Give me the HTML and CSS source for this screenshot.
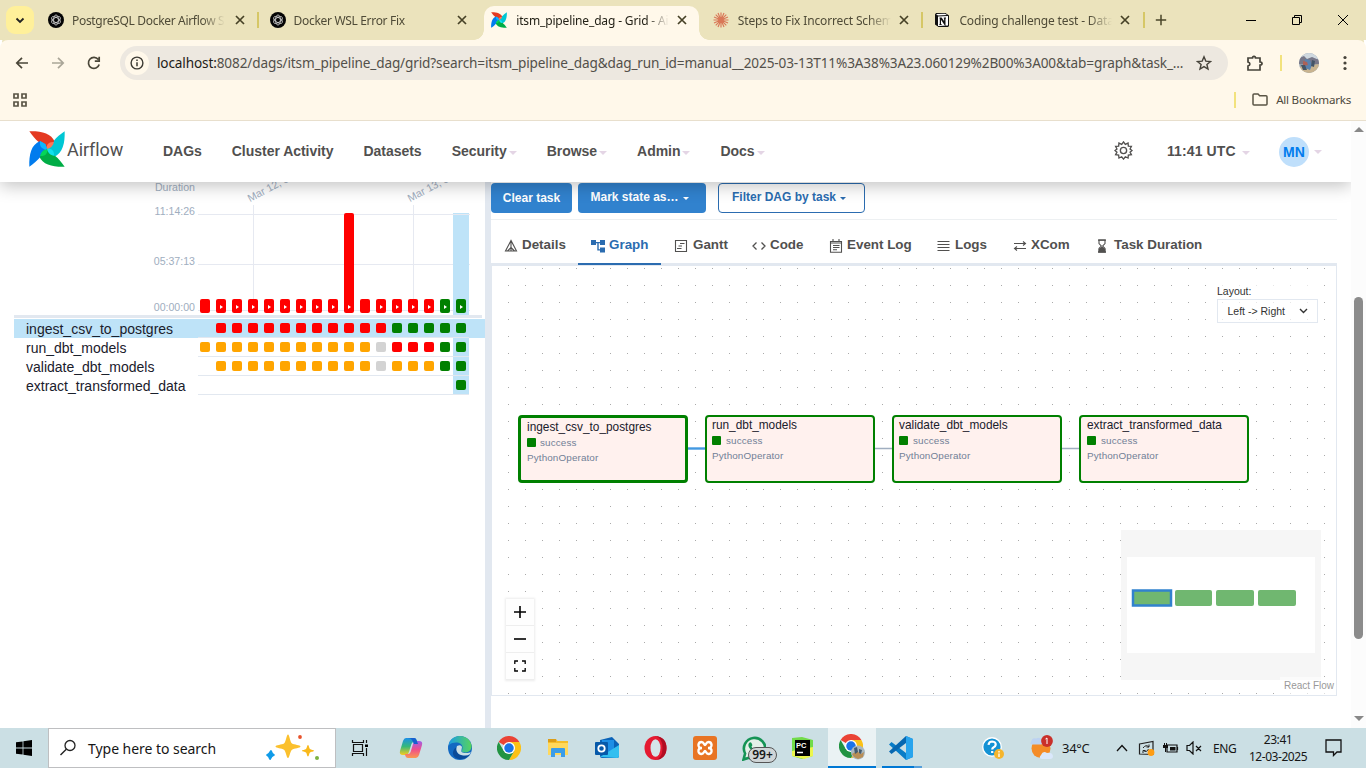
FILE: index.html
```html
<!DOCTYPE html>
<html lang="en">
<head>
<meta charset="utf-8">
<title>itsm_pipeline_dag - Grid - Airflow</title>
<link rel="stylesheet" href="styles.css">
</head>
<body>
<svg class="defs" aria-hidden="true">
  <symbol id="close" viewBox="0 0 12 12"><path d="M2 2l8 8M10 2l-8 8" stroke="currentColor" stroke-width="1.7" fill="none"/></symbol>
  <symbol id="gpt" viewBox="0 0 16 16"><circle cx="8" cy="8" r="8" fill="#050505"/><g fill="none" stroke="#d5d5d5" stroke-width=".8"><ellipse cx="8" cy="8" rx="2.4" ry="5"/><ellipse cx="8" cy="8" rx="2.4" ry="5" transform="rotate(60 8 8)"/><ellipse cx="8" cy="8" rx="2.4" ry="5" transform="rotate(120 8 8)"/></g></symbol>
  <symbol id="pinwheel" viewBox="0 0 107 107">
    <g fill="#e43921"><path d="M1 1C36 0 66 6 77 33L66 50 53.500 53.500C50 38 38 33 29 33 20 26 9 13 1 1Z"/><path d="M53.500 53.500C50 40 60 30 77 33L68 49Z" fill="#ff7557"/></g>
    <g transform="rotate(90 53.500 53.500)" fill="#00c7d4"><path d="M1 1C36 0 66 6 77 33L66 50 53.500 53.500C50 38 38 33 29 33 20 26 9 13 1 1Z"/><path d="M53.500 53.500C50 40 60 30 77 33L68 49Z" fill="#11e1ee"/></g>
    <g transform="rotate(180 53.500 53.500)" fill="#00ad46"><path d="M1 1C36 0 66 6 77 33L66 50 53.500 53.500C50 38 38 33 29 33 20 26 9 13 1 1Z"/><path d="M53.500 53.500C50 40 60 30 77 33L68 49Z" fill="#04d659"/></g>
    <g transform="rotate(270 53.500 53.500)" fill="#017cee"><path d="M1 1C36 0 66 6 77 33L66 50 53.500 53.500C50 38 38 33 29 33 20 26 9 13 1 1Z"/><path d="M53.500 53.500C50 40 60 30 77 33L68 49Z" fill="#0cb6ff"/></g>
  </symbol>
  <symbol id="chrome" viewBox="0 0 48 48"><path d="M24 24L3.200 12A24 24 0 0 1 44.800 12L24 12Z" fill="#ea4335"/><path d="M44.800 12A24 24 0 0 1 24 48L34.400 30 34 18 24 12Z" fill="#fbc116"/><path d="M3.200 12A24 24 0 0 0 24 48L34.400 30 24 34 13.600 30Z" fill="#229342"/><circle cx="24" cy="24" r="12" fill="#fff"/><circle cx="24" cy="24" r="9.500" fill="#1a73e8"/></symbol>
</svg>

<header class="tabs">
  <span class="tab-search"><svg width="10" height="7" viewBox="0 0 10 7"><path d="M1.500 1.500L5 5l3.500-3.500" fill="none" stroke="#222" stroke-width="1.800"/></svg></span>
  <div class="tab sep"><svg class="fav"><use href="#gpt"/></svg><span class="title">PostgreSQL Docker Airflow S</span><svg class="x"><use href="#close"/></svg></div>
  <div class="tab"><svg class="fav"><use href="#gpt"/></svg><span class="title">Docker WSL Error Fix</span><svg class="x"><use href="#close"/></svg></div>
  <div class="tab active"><svg class="fav"><use href="#pinwheel"/></svg><span class="title">itsm_pipeline_dag - Grid - Ai</span><svg class="x"><use href="#close"/></svg></div>
  <div class="tab sep"><svg class="fav" viewBox="0 0 16 16"><path d="M8 .5v15M.5 8h15M2.700 2.700l10.600 10.600M2.700 13.300L13.300 2.700M5 1l6 14M11 1L5 15M1 5l14 6M1 11l14-6" stroke="#d97757" stroke-width="1.150"/></svg><span class="title">Steps to Fix Incorrect Schem</span><svg class="x"><use href="#close"/></svg></div>
  <div class="tab sep"><svg class="fav" viewBox="0 0 16 16"><path d="M1 2.500L2 1h9.500L15 3.500V14l-1 1H4.500L1 12.500Z" fill="#111"/><path d="M4 4.500L14 4v9.500L4 14Z" fill="#fff"/><path d="M2 2l9-.3L13 3 4 3.400Z" fill="#fff"/><path d="M5.500 6h1.800l3.400 5V6.400M12 6H9.800M6.400 6v6.500M5.400 12.500h2.200M10.900 6v6.500L6.800 6.500" stroke="#111" stroke-width="1.200" fill="none"/></svg><span class="title">Coding challenge test - Data</span><svg class="x"><use href="#close"/></svg></div>
  <svg class="plus" viewBox="0 0 12 12"><path d="M6 .8v10.400M.8 6h10.400" stroke="#4a4529" stroke-width="1.500"/></svg>
  <div class="win">
    <svg width="12" height="12"><path d="M1 6.500h10" stroke="#000"/></svg>
    <svg width="12" height="12"><path d="M1.500 3.500h7v7h-7zM3.500 3.500v-2h7v7h-2" fill="none" stroke="#000"/></svg>
    <svg width="12" height="12"><path d="M1 1l10 10M11 1L1 11" stroke="#000"/></svg>
  </div>
</header>

<section class="toolbar">
  <div class="address">
    <svg width="14" height="14" viewBox="0 0 14 14"><path d="M13 7H2M7 1.800L1.800 7 7 12.200" fill="none" stroke="#4a4638" stroke-width="1.700"/></svg>
    <svg width="14" height="14" viewBox="0 0 14 14"><path d="M1 7h11M7 1.800L12.200 7 7 12.200" fill="none" stroke="#aaa698" stroke-width="1.700"/></svg>
    <svg width="14" height="14" viewBox="0 0 14 14"><path d="M12.200 8.500A5.500 5.500 0 1 1 11.300 3.500M12.200.8v4.400H7.800" fill="none" stroke="#4a4638" stroke-width="1.700"/></svg>
    <div class="url">
      <span class="info"><svg width="14" height="14" viewBox="0 0 14 14"><circle cx="7" cy="7" r="5.900" fill="none" stroke="#3c3a33" stroke-width="1.400"/><path d="M7 6.200v4M7 3.500v1.600" stroke="#3c3a33" stroke-width="1.500"/></svg></span>
      <span class="url-text"><b>localhost:</b>8082/dags/itsm_pipeline_dag/grid?search=itsm_pipeline_dag&amp;dag_run_id=manual__2025-03-13T11%3A38%3A23.060129%2B00%3A00&amp;tab=graph&amp;task_...</span>
      <svg class="star" width="16" height="16" viewBox="0 0 16 16"><path d="M8 1.800l1.800 4.300 4.700.4-3.600 3 1.100 4.600-4-2.500-4 2.500 1.100-4.600-3.600-3 4.700-.4Z" fill="none" stroke="#46433a" stroke-width="1.400"/></svg>
    </div>
    <svg class="ext" width="18" height="18" viewBox="0 0 18 18"><path d="M2 4h4.500c0-2.300 3-2.300 3 0H14v4c2.700 0 2.700 3.200 0 3.200V16H2v-4c2.500-.5 2.500-3.500 0-4Z" fill="none" stroke="#46433a" stroke-width="1.700"/></svg>
    <i class="bar"></i>
    <svg class="profile" width="20" height="20" viewBox="0 0 20 20"><clipPath id="pc"><circle cx="10" cy="10" r="10"/></clipPath><g clip-path="url(#pc)"><path fill="#8b9bab" d="M0 0h20v20H0z"/><path fill="#cfd8df" d="M0 0h20v6H0z"/><path fill="#778" d="M0 5l5-2 3 3 5-2 7 3v4H0z"/><path fill="#c9b48f" d="M0 14l20-3v10H0z"/><path fill="#5a82ad" d="M6 6l5 1 2 5-2 5-5-2z"/><path fill="#ad6156" d="M4 8l4 1 1 3-5 1z"/><path fill="#456" d="M2 12l4 0 2 5-4 0zM13 7l3 1-1 6-3-1z"/></g></svg>
    <svg class="dots" width="4" height="16"><g fill="#46433a"><circle cx="2" cy="2.500" r="1.600"/><circle cx="2" cy="8" r="1.600"/><circle cx="2" cy="13.500" r="1.600"/></g></svg>
  </div>
  <div class="bookmarks">
    <svg width="14" height="14"><path d="M1 1h4v4H1zM9 1h4v4H9zM1 9h4v4H1zM9 9h4v4H9z" fill="none" stroke="#5a5445" stroke-width="1.700"/></svg>
    <span class="allbm"><i class="bar"></i><svg width="16" height="13" viewBox="0 0 16 13"><path d="M1 2q0-1 1-1h4l1.700 1.700H14q1 0 1 1V11q0 1-1 1H2q-1 0-1-1Z" fill="none" stroke="#5a5445" stroke-width="1.500"/></svg><span>All Bookmarks</span></span>
  </div>
</section>

<main class="viewport">
 <div class="page">
  <nav class="navbar">
    <svg class="logo"><use href="#pinwheel"/></svg><span class="brand">Airflow</span>
    <div class="menu"><span>DAGs</span><span>Cluster Activity</span><span>Datasets</span><span>Security<i></i></span><span>Browse<i></i></span><span>Admin<i></i></span><span>Docs<i></i></span></div>
    <svg class="gear" viewBox="0 0 20 20"><path d="M10 1l1.900 2.600 2.900-1.400.3 3.200 3.200.3-1.400 2.700L19 10l-2.100 1.700 1.400 2.700-3.200.4-.3 3.200-2.900-1.400L10 19l-1.900-2.400L5.200 18l-.3-3.200-3.200-.4 1.400-2.700L1 10l2.100-1.600-1.400-2.700 3.200-.3.3-3.200 2.900 1.400Z" fill="none" stroke="#51504f" stroke-width="1.400"/><circle cx="10" cy="10" r="3.300" fill="none" stroke="#51504f" stroke-width="1.400"/></svg>
    <span class="clock">11:41 UTC<i></i></span>
    <span class="avatar">MN</span><i class="caret"></i>
  </nav>

  <div class="content">
    <section class="grid">
      <div class="chart">
        <div class="axis"><span>Duration</span><span>11:14:26</span><span>05:37:13</span><span>00:00:00</span></div>
        <div class="plot">
          <svg class="lines" width="272" height="134"><path d="M0 32.500h272M0 82.500h272M0 128.500h272M55.500 23v105M215.500 23v105" stroke="#e6e9f1"/></svg>
          <span class="date d1">Mar 12, 08:30</span><span class="date d2">Mar 13, 00:00</span>
          <div class="bars"><p><b class="plain"></b></p><p><b></b></p><p><b></b></p><p><b></b></p><p><b></b></p><p><b></b></p><p><b></b></p><p><b></b></p><p><b></b></p><p><b class="tall"></b></p><p><b class="plain"></b></p><p><b></b></p><p><b></b></p><p><b></b></p><p><b></b></p><p><b class="ok"></b></p><p class="sel"><b class="ok"></b></p></div>
        </div>
      </div>
      <div class="rows">
        <div class="row on"><span>ingest_csv_to_postgres</span><div><i></i><i class="f"></i><i class="f"></i><i class="f"></i><i class="f"></i><i class="f"></i><i class="f"></i><i class="f"></i><i class="f"></i><i class="f"></i><i class="f"></i><i class="f"></i><i class="s"></i><i class="s"></i><i class="s"></i><i class="s"></i><i class="s"></i></div></div>
        <div class="row"><span>run_dbt_models</span><div><i class="u"></i><i class="u"></i><i class="u"></i><i class="u"></i><i class="u"></i><i class="u"></i><i class="u"></i><i class="u"></i><i class="u"></i><i class="u"></i><i class="u"></i><i class="n"></i><i class="f"></i><i class="f"></i><i class="f"></i><i class="s"></i><i class="s"></i></div></div>
        <div class="row"><span>validate_dbt_models</span><div><i></i><i class="u"></i><i class="u"></i><i class="u"></i><i class="u"></i><i class="u"></i><i class="u"></i><i class="u"></i><i class="u"></i><i class="u"></i><i class="u"></i><i class="n"></i><i class="u"></i><i class="u"></i><i class="u"></i><i class="s"></i><i class="s"></i></div></div>
        <div class="row"><span>extract_transformed_data</span><div><i></i><i></i><i></i><i></i><i></i><i></i><i></i><i></i><i></i><i></i><i></i><i></i><i></i><i></i><i></i><i></i><i class="s"></i></div></div>
      </div>
    </section>
    <div class="divider"></div>
    <section class="details">
      <div class="actions"><button class="solid">Clear task</button><button class="solid mark">Mark state as…<i></i></button><button class="outline">Filter DAG by task<i></i></button></div>
      <div class="dtabs">
        <span class="t-details"><svg width="14" height="14" viewBox="0 0 14 14"><path d="M7 1.500L1.500 12h11ZM7 2v10M7 8.500L3.500 12M7 8.500l3.500 3.500" fill="none" stroke="#51504f" stroke-width="1.100"/></svg>Details</span>
        <span class="t-graph"><svg width="14" height="14" viewBox="0 0 14 14"><path d="M0 1h5v5H0zM9 1h5v5H9zM9 8.500h5v5H9zM5 3h4v1.300H7.700v6H9v1.300H6.300V4.300H5z" fill="#2b6cb0"/></svg>Graph</span>
        <span class="t-gantt"><svg width="14" height="14" viewBox="0 0 14 14"><path d="M1.500 1.500h11v11h-11zM6 4.500h4.500M4.500 7h3.500M3 9.500h4.500" fill="none" stroke="#51504f" stroke-width="1.100"/></svg>Gantt</span>
        <span class="t-code"><svg width="14" height="14" viewBox="0 0 14 14"><path d="M4.500 3.500L1 7l3.500 3.500M9.500 3.500L13 7l-3.500 3.500" fill="none" stroke="#51504f" stroke-width="1.300"/></svg>Code</span>
        <span class="t-event"><svg width="14" height="14" viewBox="0 0 14 14"><path d="M1.500 2.500h11v10.800h-11zM1.500 4h11M4 0v2M10 0v2M4 6.500h6.500M4 8.500h6.500M4 10.800h4" fill="none" stroke="#51504f" stroke-width="1.100"/></svg>Event Log</span>
        <span class="t-logs"><svg width="13" height="14" viewBox="0 0 13 14"><path d="M.5 2.500h12M.5 5.500h12M.5 8.500h12M.5 11.500h12" stroke="#51504f" stroke-width="1.100"/></svg>Logs</span>
        <span class="t-xcom"><svg width="14" height="14" viewBox="0 0 14 14"><path d="M1 4.500h11M10 2.500L12.500 4.500 10 6.500M13 9.500H2M4 7.500L1.500 9.500l2.500 2" fill="none" stroke="#51504f" stroke-width="1.100"/></svg>XCom</span>
        <span class="t-task"><svg width="12" height="14" viewBox="0 0 12 14"><path d="M3 1h6v3.500L6.700 7 9 9.500V13H3V9.500L5.300 7 3 4.500Z" fill="none" stroke="#51504f" stroke-width="1.100"/><path d="M6 7.500l3.300 2.500V13H2.700v-3ZM2 .5h8v1.300H2zM2 12.200h8v1.500H2z" fill="#51504f"/></svg>Task Duration</span>
      </div>
      <div class="canvas">
        <svg class="edges" width="846" height="431"><path d="M196 183.500h19" stroke="#4299e1" stroke-width="2.400"/><path d="M383 183.500h19M570 183.500h19" stroke="#a0aec0" stroke-width="1.500"/></svg>
        <article class="node n1"><h4>ingest_csv_to_postgres</h4><p><i></i>success</p><p>PythonOperator</p></article>
        <article class="node n2"><h4>run_dbt_models</h4><p><i></i>success</p><p>PythonOperator</p></article>
        <article class="node n3"><h4>validate_dbt_models</h4><p><i></i>success</p><p>PythonOperator</p></article>
        <article class="node n4"><h4>extract_transformed_data</h4><p><i></i>success</p><p>PythonOperator</p></article>
        <div class="layout">Layout:<div>Left -&gt; Right<svg width="9" height="6"><path d="M1 1l3.500 3.500L8 1" fill="none" stroke="#333" stroke-width="1.400"/></svg></div></div>
        <div class="zoom">
          <span><svg width="12" height="12"><path d="M6 0v12M0 6h12" stroke="#000" stroke-width="1.600"/></svg></span>
          <span><svg width="12" height="12"><path d="M0 6h12" stroke="#000" stroke-width="1.600"/></svg></span>
          <span><svg width="12" height="12"><path d="M.8 4V1h3.200M8 1h3.200v3M11.200 8v3H8M4 11H.8V8" fill="none" stroke="#000" stroke-width="1.300"/></svg></span>
        </div>
        <svg class="minimap" width="200" height="150"><path d="M0 0h200v150H0z" fill="#f6f6f6"/><path d="M6 27h188v96H6z" fill="#fff"/><g fill="#70b770"><rect x="12" y="60.500" width="38" height="15" stroke="#3182ce" stroke-width="2.500"/><rect x="54" y="60" width="37" height="16" rx="2"/><rect x="95" y="60" width="38" height="16" rx="2"/><rect x="137" y="60" width="38" height="16" rx="2"/></g></svg>
        <span class="attribution">React Flow</span>
      </div>
    </section>
  </div>
 </div>
 <div class="scroll"><i class="up"></i><i class="thumb"></i><i class="down"></i></div>
</main>

<footer class="taskbar">
  <span class="start"><svg width="16" height="16" viewBox="0 0 16 16"><path d="M0 2.300l6.600-.9v6.200H0zM7.400 1.300L16 0v7.600H7.400zM0 8.400h6.600v6.200L0 13.700zM7.400 8.400H16V16l-8.600-1.300z"/></svg></span>
  <div class="search"><svg width="18" height="18" viewBox="0 0 18 18"><circle cx="11" cy="6.500" r="5" fill="none" stroke="#222" stroke-width="1.300"/><path d="M7.300 10.200L1.500 16" stroke="#222" stroke-width="1.400"/></svg><span>Type here to search</span>
    <svg class="spark" width="64" height="30" viewBox="0 0 64 30"><path d="M25 1.500c1.500 0 2 7.500 4 9 2 1.300 8.500 1.500 8.500 3s-6.500 1.800-8.500 3.200c-2 1.600-2.500 8.300-4 8.300s-2-6.700-4-8.300c-2-1.400-8.500-1.700-8.500-3.200s6.500-1.700 8.500-3c2-1.500 2.500-9 4-9Z" fill="#fbc02d"/><path d="M45 12c1 0 1 3 2 4s4 .8 4 1.800-3 .8-4 1.800-1 4-2 4-1-3-2-4-4-.8-4-1.800 3-.8 4-1.800 1-4 2-4Z" fill="#f9b91c"/><path d="M8 18q.8 3 3 4-2.500.8-4 4-1-3-3-4 2.500-1 4-4Z" fill="#109be8" stroke="#109be8" stroke-width="1.800" stroke-linejoin="round"/><circle cx="37" cy="4" r="1.900" fill="#e8522b"/><circle cx="54" cy="25" r="2" fill="#7cb342"/></svg></div>
  <span class="slot view"><svg width="18" height="16" viewBox="0 0 18 16"><path d="M2.500 4.500h9v7h-9zM1.500 0v2.500h11V0M1.500 16v-2.500h11V16M15.500 0v3M15.500 8v8" fill="none" stroke="#111" stroke-width="1.200"/><path d="M14 4.500h3v2.500h-3z"/></svg></span>
  <span class="slot"><svg width="24" height="24" viewBox="0 0 24 24"><defs><linearGradient id="c1" x1="0" y1="0" x2="0" y2="1"><stop stop-color="#1b8fe8"/><stop offset=".5" stop-color="#35b979"/><stop offset="1" stop-color="#f8cb20"/></linearGradient><linearGradient id="c2" x1="0" y1="0" x2="0" y2="1"><stop stop-color="#9e5fe8"/><stop offset=".5" stop-color="#ef4f8b"/><stop offset="1" stop-color="#fb9850"/></linearGradient></defs><path d="M7 2h8q2 0 2.600 2L18 6h-3q-2 0-2.600 2L10 16q-1 3-3 3H4q-4 0-3-4L4 5q1-3 3-3Z" fill="url(#c1)"/><path d="M17 22H9q-2 0-2.600-2L6 18h3q2 0 2.600-2L14 8q1-3 3-3h3q4 0 3 4l-3 10q-1 3-3 3Z" fill="url(#c2)"/><path d="M9 2h6q2 0 2.500 2L19 8h-4L13 4Q12 2 9 2Z" fill="#1760ce"/></svg></span>
  <span class="slot"><svg width="24" height="24" viewBox="0 0 24 24"><defs><linearGradient id="e1"><stop stop-color="#1b9de2"/><stop offset="1" stop-color="#57d45d"/></linearGradient></defs><circle cx="12" cy="12" r="12" fill="#1269c2"/><path d="M1 9C2-2 20-4 23.500 9c1 7-7 9-10 6.500 0-1.500 1-1.500 1-4C14.500 6 6 5 1 9Z" fill="url(#e1)"/><path d="M9 11c-2 5 2 10 11 8 1-.3 2-.5 1 .6C15 26 4 23 5 16q1-4 4-5Z" fill="#0b4b98"/><path d="M14 11q-1-3-5-1c-2 5 1 8 4 9q6 1.500 9-1l.8-2c-3 2-10 1-9.500-1Z" fill="#cbdfe4"/></svg></span>
  <span class="slot"><svg width="24" height="24"><use href="#chrome"/></svg></span>
  <span class="slot"><svg width="22" height="20" viewBox="0 0 22 20"><path d="M1 1h8l1.500 2H21v14H1z" fill="#f5bd29"/><path d="M1 5h20v12H1z" fill="#ffd85c"/><path d="M1 1h8v3H1z" fill="#dc9d18"/><path d="M4 11q0-1 1-1h12q1 0 1 1v8h-4v-4H8v4H4z" fill="#3b9de8"/></svg></span>
  <span class="slot"><svg width="24" height="22" viewBox="0 0 24 22"><path d="M5 3L17 0l7 7v12q0 2-2 2H7q-2 0-2-2Z" fill="#0a63b8"/><path d="M7 3h12v12H7z" fill="#1d8ee6"/><path d="M5 20L24 8v11q0 2-2 2Z" fill="#32bff0"/><rect y="5" width="13" height="13" rx="1" fill="#0759a9"/><circle cx="6.500" cy="11.500" r="3.200" stroke="#fff" stroke-width="1.800" fill="none"/></svg></span>
  <span class="slot"><svg width="23" height="24" viewBox="0 0 23 24"><ellipse cx="11.500" cy="12" rx="11" ry="12" fill="#e51a31"/><path d="M11.500 0Q22.500 1 22.500 12t-11 12q7-2 7-12t-7-12Z" fill="#b10d22"/><ellipse cx="11.500" cy="12" rx="5" ry="8.800" fill="#d5e5e9"/></svg></span>
  <span class="slot"><svg width="24" height="24" viewBox="0 0 24 24"><rect width="24" height="24" rx="3" fill="#e87423"/><path d="M9 12q-4 0-3.500-3.500.5-2.500 3-2.500c2.500 0 2.500 3 3.500 3s1-3 3.500-3q2.500 0 3 2.500Q19 12 15 12q4 0 3.500 3.500-.5 2.500-3 2.500c-2.500 0-2.500-3-3.500-3s-1 3-3.500 3q-2.500 0-3-2.500Q5 12 9 12Z" fill="none" stroke="#fff" stroke-width="2.400"/></svg></span>
  <span class="slot wa"><svg width="24" height="25" viewBox="0 0 24 25"><path d="M1.500 23.500l1.600-6A10.700 10.700 0 1 1 7 21.700Z" fill="#e4f1e9" stroke="#159455" stroke-width="2.600"/><path d="M7 7q2-2 3 1 1 1-.5 2.500 1 3 4 4 2-2 3.500-.5 2 1 0 3-4 2-8-3-4-4-2-7Z" fill="#159455"/></svg><em>99+</em></span>
  <span class="slot"><svg width="21" height="22" viewBox="0 0 21 22"><path d="M0 1l10-1 11 3v16l-11 3-10-3Z" fill="#72db49"/><path d="M0 14l21-4v9l-9 3-12-3Z" fill="#ecf64d"/><path d="M3 3h15v16H3z"/><path d="M5 15.500h6" stroke="#fff" stroke-width="1.500"/><text x="4" y="10.500" font-size="7.500" font-weight="700" font-family="Liberation Sans, sans-serif" fill="#fff">PC</text></svg></span>
  <span class="slot cur"><svg width="26" height="26" viewBox="0 0 26 26"><use href="#chrome" width="24" height="24"/><circle cx="19" cy="18.500" r="7" fill="#a9b8bf"/><path d="M13 20l5-3 4 3 3-2-1 5-5 2-4-2Z" fill="#b98e56"/><path d="M15 14l3-1 1 5-3 2ZM20 15l3 1-1 4-2-1Z" fill="#435b70"/></svg></span>
  <span class="slot code"><svg width="24" height="24" viewBox="0 0 24 24"><path d="M17 0L24 3v18l-7 3L0 8.500 2.500 6 17 17Z" fill="#087cc7"/><path d="M17 0v7L2.500 18 0 15.500Z" fill="#0767b0"/><path d="M17 0l7 3v18l-7 3Z" fill="#28a4ed"/></svg></span>
  <div class="tray">
    <svg class="help" width="22" height="22" viewBox="0 0 22 22"><circle cx="10" cy="10" r="9.300" fill="#1492d4" stroke="#fff" stroke-width="1.400"/><path d="M6.500 7.800q.5-3.300 3.700-3.300 3.800.3 3.500 3.300-.4 2-2.300 2.800-1.200.6-1.200 2M10.200 14v2" stroke="#fff" stroke-width="2.200" fill="none"/><circle cx="17" cy="17" r="5" fill="#f5b52c"/><path d="M17 14v1.500M17 16.500V20" stroke="#fff" stroke-width="1.300"/></svg>
    <svg class="weather" width="26" height="26" viewBox="0 0 26 26"><circle cx="12" cy="13.500" r="9.500" fill="#f48c28"/><path d="M2 7q1-5 5-3.500 5-2 6 2 3 3-1 4H4Q0 9 2 7Z" fill="#bcd2f1"/><path d="M12 20q2-5 6-2 5-1 6 3 0 3-3 3h-8q-4-1-1-4Z" fill="#dae8fc"/><circle cx="18" cy="6" r="5.900" fill="#c9302a"/><path d="M16.500 4L18 3v6" stroke="#fff" fill="none"/></svg>
    <span class="temp">34°C</span>
    <svg class="up" width="12" height="8"><path d="M1 7l5-5.500L11 7" fill="none" stroke="#111" stroke-width="1.300"/></svg>
    <svg class="sync" width="17" height="17" viewBox="0 0 17 17"><path d="M1.500 4L15 1.500v13L1.500 14Z" fill="none" stroke="#222" stroke-width="1.200"/><path d="M5 8q3-4 6-1M11 4.500V7H8.500M10.500 9q-2 4-5 1.500M5 13v-2.500h2.500" fill="none" stroke="#222"/><circle cx="13" cy="12.500" r="3.400" fill="#ff9d13"/></svg>
    <svg class="battery" width="17" height="14" viewBox="0 0 17 14"><path d="M5 4h10v7H5zM15.500 6v3" fill="none" stroke="#111" stroke-width="1.200"/><path d="M8 6h5.500v3.500H8zM1 4h5v3H1zM2 2h1v2H2zM4 2h1v2H4zM3 7h1v4H3z" fill="#111"/></svg>
    <svg class="mute" width="16" height="14" viewBox="0 0 16 14"><path d="M1 4.500h2.500L7 1v12L3.500 9.500H1ZM10 5l5 5M15 5l-5 5" fill="none" stroke="#111" stroke-width="1.200"/></svg>
    <span class="lang">ENG</span>
    <span class="time">23:41<br>12-03-2025</span>
    <svg class="note" width="18" height="18" viewBox="0 0 18 18"><path d="M1 1h15v12h-4L8.500 16.500V13H1Z" fill="none" stroke="#111" stroke-width="1.300"/></svg>
  </div>
</footer>
</body>
</html>
```
FILE: styles.css
```css
* { box-sizing: border-box; }
body { margin: 0; width: 1366px; height: 768px; overflow: hidden; display: flex; flex-direction: column; background: #fff; font-family: "Liberation Sans", Arial, sans-serif; color: #51504f; }
svg { flex: none; display: block; }
p, h4 { margin: 0; font-weight: 400; }
.defs { display: none; }

/* browser tab strip */
.tabs { height: 40px; display: flex; align-items: center; background: #ebe3bc; font-family: "Noto Sans", sans-serif; font-size: 12px; color: #4f4b37; flex: none; }
.tab-search { width: 28px; height: 28px; margin-left: 6px; margin-right: 3px; border-radius: 9px; background: #fff09a; display: flex; align-items: center; justify-content: center; flex: none; }
.tab { width: 221.6px; height: 40px; padding-left: 11px; display: flex; align-items: center; position: relative; flex: none; }
.fav { width: 16px; height: 16px; margin-right: 8px; }
.title { width: 153px; white-space: nowrap; letter-spacing: -.32px; -webkit-mask-image: linear-gradient(90deg, #000 130px, transparent 153px); mask-image: linear-gradient(90deg, #000 130px, transparent 153px); }
.tab:nth-child(n+4) .title { letter-spacing: -.15px; }
.tab:nth-child(n+4) .fav { margin-right: 9px; }
.tab:nth-child(n+4) .x { margin-left: 7px; }
.x { width: 12px; height: 12px; margin-left: 9px; color: #464126; }
.sep { background: linear-gradient(#d6c766, #d6c766) right center / 2px 16px no-repeat; }
.active { color: #242218; z-index: 1; }
.active::before { content: ""; position: absolute; z-index: -1; left: 4px; right: 3px; top: 6px; bottom: 0; border-radius: 10px 10px 0 0; background: #fff8ea; }
.active::after { content: ""; position: absolute; z-index: -2; left: -6px; right: -7px; bottom: 0; height: 10px; background: radial-gradient(circle at 0 0, transparent 9.500px, #fff8ea 10px) left / 10px 10px no-repeat, radial-gradient(circle at 100% 0, transparent 9.500px, #fff8ea 10px) right / 10px 10px no-repeat; }
.plus { width: 12px; height: 12px; margin-left: 10px; }
.win { margin-left: auto; margin-right: 17px; display: flex; gap: 34px; }

/* browser toolbar */
.toolbar { height: 81px; background: #fff8ea; border-bottom: 1px solid #e8dfcd; flex: none; box-shadow: 0 -6px 0 -2px #ebe3bc; border-radius: 8px 8px 0 0; font-family: "Noto Sans", sans-serif; }
.address { height: 46px; display: flex; align-items: center; padding-left: 15px; }
.address > svg:nth-child(2), .address > svg:nth-child(3) { margin-left: 22px; }
.url { margin-left: 19px; width: 1108px; height: 34px; border-radius: 17px; background: #ede8e0; display: flex; align-items: center; }
.info { width: 24px; height: 24px; margin-left: 5px; border-radius: 50%; background: #fff8ea; display: flex; align-items: center; justify-content: center; }
.url-text { width: 1028px; margin-left: 8px; padding-bottom: 1px; font-size: 13.600px; letter-spacing: -.137px; white-space: nowrap; color: #53504a; }
.url-text b { font-weight: 400; color: #1d1c18; }
.star { margin-left: 11px; }
.ext { margin-left: 18px; }
.bar { width: 2px; height: 16px; background: #f2e27d; }
.address .bar { margin-left: 16px; }
.profile { margin-left: 17px; }
.dots { margin-left: 24px; }
.bookmarks { height: 34px; padding: 0 15px 7px 13px; display: flex; justify-content: space-between; align-items: center; }
.allbm { display: flex; align-items: center; font-size: 11.600px; color: #4d493d; letter-spacing: -.25px; }
.allbm svg { margin: 0 8px 0 16px; }

/* viewport */
.viewport { height: 607px; display: flex; flex: none; }
.page { width: 1351px; display: flex; flex-direction: column; overflow: hidden; }
.navbar { height: 61px; flex: none; display: flex; align-items: center; padding-left: 29px; position: relative; z-index: 3; background: #fff; box-shadow: 0 4px 16px rgba(0,0,0,.24); font-size: 14px; font-weight: 700; }
.logo { width: 36px; height: 36px; margin-bottom: 6px; }
.brand { width: 57px; margin: -4px 0 0 2px; font: 18px Roboto, sans-serif; letter-spacing: -.1px; }
.menu { display: flex; gap: 30px; margin-left: 39px; width: 951px; padding-bottom: 2px; letter-spacing: -.03px; }
.navbar i { display: inline-block; border: 4px solid transparent; border-top-color: #e4d5e5; border-bottom: 0; margin-left: 2px; vertical-align: 1px; }
.gear { width: 19px; height: 19px; margin-bottom: 3px; }
.clock { margin-left: 34px; width: 112px; letter-spacing: .1px; padding-bottom: 2px; }
.navbar .clock i { margin-left: 6px; }
.avatar { width: 30px; height: 30px; line-height: 30px; text-align: center; border-radius: 50%; background: #bfdffb; color: #017cee; }
.navbar .caret { margin-left: 5px; }
.content { flex: 1; display: flex; }
.scroll { width: 15px; background: #fcfcfc; display: flex; flex-direction: column; align-items: center; padding: 6px 0 7px; }
.scroll .up { border: 5px solid transparent; border-bottom: 5px solid #888; border-top: 0; }
.scroll .thumb { width: 9px; height: 342px; border-radius: 5px; background: #8b8b8b; margin-top: 165px; }
.scroll .down { border: 5px solid transparent; border-top: 5px solid #888; border-bottom: 0; margin-top: auto; }

/* run grid */
.grid { width: 485px; padding-left: 14px; }
.chart { height: 136px; border-bottom: 3px solid #e2e8f0; display: flex; margin-right: 3px; }
.axis { width: 181px; margin-top: -1px; font-size: 10.600px; line-height: 12px; text-align: right; color: #a0aec0; display: flex; flex-direction: column; }
.axis span:nth-child(2) { margin-top: 12px; }
.axis span:nth-child(3) { margin-top: 38px; }
.axis span:nth-child(4) { margin-top: 34px; }
.plot { width: 274px; margin-left: 2px; position: relative; }
.lines { position: absolute; left: 1px; top: 0; }
.date { position: absolute; top: 10px; font-size: 10.600px; color: #a0aec0; transform: rotate(-28deg); transform-origin: 0 100%; white-space: nowrap; }
.d1 { left: 54px; }
.d2 { left: 214px; }
.bars { display: flex; height: 133px; position: relative; }
.bars p { width: 16px; flex: none; display: flex; align-items: flex-end; justify-content: center; padding-bottom: 2px; margin-top: 31px; }
.bars .sel { background: linear-gradient(#e6e9f1, #e6e9f1) 0 1px / 100% 1px no-repeat, #bee3f8; }
.bars b { width: 10px; height: 14px; border-radius: 2px; background: red; display: flex; align-items: flex-end; }
.bars b::after { content: ""; margin: 0 0 4px 4px; border: 2px solid transparent; border-left: 3.500px solid #fff; border-right: 0; }
.bars .plain::after { display: none; }
.bars .tall { height: 100px; }
.bars .ok { background: green; }
.rows { padding-top: 1px; }
.row { height: 19px; display: flex; font-size: 14px; color: #1a202c; }
.row.on { background: #bee3f8; }
.row > span { width: 184px; padding-left: 12px; line-height: 20px; }
.row > div { width: 271px; border-bottom: 1px solid #e2e8f0; display: flex; align-items: center; }
.row > div i { flex: none; width: 10px; height: 10px; margin: 0 4px 0 2px; border-radius: 2px; }
.row > div i:last-child { margin-right: 0; }
.row:not(.on) > div { background: linear-gradient(#bee3f8, #bee3f8) right / 16px 18px no-repeat; }
.f { background: red; } .s { background: green; } .u { background: orange; } .n { background: #d3d3d3; }
.divider { width: 6px; background: #e2e8f0; }

/* task details */
.details { width: 846px; display: flex; flex-direction: column; }
.actions { height: 38px; display: flex; border-bottom: 1px solid #edf0f2; }
.actions button { height: 30px; margin: 1px 0 0; border: 0; border-radius: 4px; font: 700 12px "Liberation Sans", sans-serif; padding: 0 0 1px; }
.solid { width: 81px; background: #3182ce; color: #fff; }
.actions .mark { width: 128px; margin-left: 6px; padding-bottom: 2px; }
.actions .outline { width: 147px; margin-left: 12px; color: #2b6cb0; background: transparent; border: 1px solid #2b6cb0; padding-bottom: 2px; }
.actions i { display: inline-block; border: 3.500px solid transparent; border-top-color: currentColor; border-bottom: 0; margin: 0 5px 0 4px; vertical-align: 1px; }
.dtabs { height: 45px; display: flex; border-bottom: 2px solid #e2e8f0; font-size: 13.400px; font-weight: 700; white-space: nowrap; }
.dtabs span { display: flex; align-items: center; gap: 4px; padding: 7px 0 3px 13px; height: 45px; }
.dtabs .t-graph { padding-bottom: 1px; }
.dtabs svg { margin-top: 2px; }
.t-details { width: 87px; } .t-graph { width: 83px; color: #2b6cb0; border-bottom: 2px solid #2b6cb0; } .t-gantt { width: 78px; } .t-code { width: 77px; } .t-event { width: 108px; } .t-logs { width: 76px; } .t-xcom { width: 83px; }
.dtabs .t-gantt, .dtabs .t-logs { gap: 5px; }
.dtabs .t-task { gap: 6px; }
.canvas { height: 431px; position: relative; border: 1px solid #e2e8f0; background: radial-gradient(circle at .5px .5px, #aaa .6px, transparent .75px) 16px 2px / 17px 17px; }
.edges { position: absolute; left: -1px; top: -1px; }
.node { position: absolute; top: 149px; width: 170px; height: 68px; padding: 2px 5px; border: 2px solid green; border-radius: 4px; background: #fff1ee; color: #718096; font-size: 9.900px; }
.node h4 { font-size: 11.850px; line-height: 13px; color: #1a202c; }
.node p { display: flex; align-items: center; line-height: 15px; height: 15px; margin-top: 1px; letter-spacing: .12px; }
.node p + p { margin-top: 0; }
.node i { width: 9px; height: 9px; border-radius: 1px; background: green; margin-right: 5px; }
.n1 { left: 26px; border-width: 3px; padding: 3px 6px; }
.n1 i { margin-right: 4px; }
.n2 { left: 213px; } .n3 { left: 400px; } .n4 { left: 587px; padding-left: 6px; }
.layout { position: absolute; left: 725px; top: 19px; font-size: 10.500px; color: #333; line-height: 13px; background: rgba(255,255,255,.7); }
.layout div { width: 101px; height: 24px; margin-top: 1px; padding: 0 9px 0 9.500px; border: 1px solid #e2e8f0; display: flex; align-items: center; justify-content: space-between; }
.zoom { position: absolute; left: 14px; top: 333px; width: 28px; box-shadow: 0 0 2px 1px rgba(0,0,0,.08); }
.zoom span { height: 27px; background: #fefefe; border-bottom: 1px solid #eee; display: flex; align-items: center; justify-content: center; }
.minimap { position: absolute; left: 629px; top: 264px; }
.attribution { position: absolute; right: 0; bottom: 0; font-size: 10px; line-height: 12px; padding: 3px 2px 3px 4px; color: #999; background: rgba(255,255,255,.6); white-space: nowrap; }

/* desktop taskbar */
.taskbar { height: 40px; background: #cbdfe4; display: flex; align-items: stretch; font-family: "Noto Sans", sans-serif; color: #161616; flex: none; }
.start { width: 48px; display: flex; align-items: center; justify-content: center; }
.search { width: 288px; border: 1px solid #bebfc1; background: #fff; display: flex; align-items: center; padding-left: 10px; }
.search span { width: 160px; margin-left: 11px; font-size: 14px; letter-spacing: -.04px; white-space: nowrap; }
.spark { margin-left: 15px; }
.slot { width: 49px; display: flex; align-items: center; justify-content: center; position: relative; flex: none; }
.view { width: 48px; margin-right: 2px; }
.wa em { position: absolute; left: 19px; top: 19px; width: 29px; height: 16px; border: 1px solid #555; border-radius: 9px; background: #cfd5d7; font: 600 12px/14px "Noto Sans", sans-serif; text-align: center; }
.cur { background: #eaf2f4; border-bottom: 2px solid #0078d4; width: 48px; margin-left: 1px; }
.code::after { content: ""; position: absolute; left: 6px; right: 3px; bottom: 0; height: 2px; background: linear-gradient(90deg, #0078d4 80%, #559fdb 80%); }
.tray { flex: 1; display: flex; align-items: center; padding-left: 57px; font-size: 12px; }
.weather { margin-left: 25px; }
.temp { width: 36px; margin-left: 7px; font-size: 13px; letter-spacing: -.3px; }
.tray .up { margin-left: 18px; }
.sync { margin-left: 10px; }
.battery { margin-left: 7px; }
.mute { margin-left: 7px; }
.lang { margin-left: 11px; width: 31px; letter-spacing: -.4px; }
.time { width: 68px; text-align: center; line-height: 17px; letter-spacing: -.45px; white-space: nowrap; }
.note { margin-left: 13px; }
```
